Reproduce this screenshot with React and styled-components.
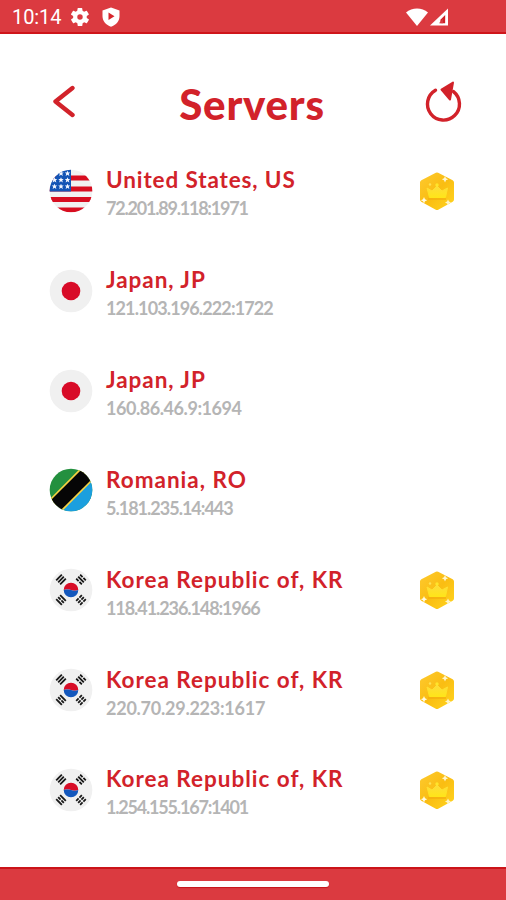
import React from 'react';
import styled, { createGlobalStyle, css } from 'styled-components';

const RED = '#d2222a';

const GlobalStyle = createGlobalStyle`
  * {
    box-sizing: border-box;
  }
  body {
    margin: 0;
    background: #fff;
    font-family: Lato, sans-serif;
  }
`;

const Screen = styled.div`
  width: 506px;
  height: 900px;
  display: flex;
  flex-direction: column;
  overflow: hidden;
  background: #fff;
`;

const bar = css`
  flex: none;
  display: flex;
  background: #db3a40;
`;

const StatusBar = styled.header`
  ${bar}
  height: 34px;
  align-items: center;
  padding: 2px 58px 0 12px;
  border-bottom: 2px solid #cf151b;
  color: #fff;
`;

const Clock = styled.span`
  width: 58px;
  font-family: Roboto, sans-serif;
  font-size: 20px;
  line-height: 32px;
  letter-spacing: -0.1px;
  white-space: nowrap;
`;

const StatusIcons = styled.div`
  display: flex;
  align-items: center;
  gap: ${({ gap }) => gap}px;
  margin-left: ${({ end }) => (end ? 'auto' : 0)};
`;

const NavBar = styled.footer`
  ${bar}
  height: 33px;
  justify-content: center;
  padding-top: 12px;
  border-top: 2px solid #cb1419;
`;

const Handle = styled.div`
  width: 152px;
  height: 6px;
  border-radius: 3px;
  background: #fff;
  box-shadow: 0 1px 1px #c6151b;
`;

const TitleBar = styled.div`
  flex: none;
  height: 107px;
  display: flex;
  align-items: flex-start;
  justify-content: space-between;
  padding: 46px 44px 0 52px;
`;

const IconButton = styled.button`
  display: block;
  padding: 0;
  border: 0;
  background: none;
  margin-top: ${({ top }) => top}px;

  svg {
    display: block;
  }
`;

const Title = styled.h1`
  margin: -2px 0 0 4px;
  color: ${RED};
  font-size: 42px;
  font-weight: 900;
  line-height: 52px;
  letter-spacing: 0.8px;
`;

const List = styled.ul`
  flex: 1;
  margin: 0;
  padding: 0 51px 0 49px;
  list-style: none;
`;

const Row = styled.li`
  height: 99.85px;
  display: flex;
  align-items: center;
`;

const Flag = styled.svg`
  flex: none;
  width: 44px;
  height: 44px;
`;

const Details = styled.div`
  flex: 1;
  margin-left: 13px;
  padding-top: 6px;
  white-space: nowrap;
`;

const Country = styled.div`
  color: ${RED};
  font-size: 22.5px;
  font-weight: 700;
  line-height: 29px;
  letter-spacing: ${({ spacing }) => spacing}px;
`;

const Address = styled.div`
  color: #b5b5b5;
  font-size: 18px;
  font-weight: 700;
  line-height: 28px;
  letter-spacing: ${({ spacing }) => spacing}px;
`;

const GearIcon = () => (
  <svg width="20" height="20" viewBox="1 1 22 22" fill="#fff">
    <path
      fillRule="evenodd"
      d="M19.4 13a7.5 7.5 0 0 0 0-2l2.1-1.6a.5.5 0 0 0 .1-.7l-2-3.4a.5.5 0 0 0-.6-.2l-2.5 1a7.4 7.4 0 0 0-1.7-1l-.4-2.6a.5.5 0 0 0-.5-.5h-4a.5.5 0 0 0-.5.4L9 5.1a7.7 7.7 0 0 0-1.7 1l-2.5-1a.5.5 0 0 0-.6.2l-2 3.4a.5.5 0 0 0 .1.7L4.500 11a7.5 7.5 0 0 0 0 2l-2.1 1.6a.5.5 0 0 0-.1.7l2 3.4c.1.2.4.3.6.2l2.5-1c.5.4 1.1.8 1.7 1l.4 2.6c0 .3.2.5.5.5h4c.2 0 .5-.2.5-.4l.4-2.7a7.7 7.7 0 0 0 1.7-1l2.5 1c.2.1.5 0 .6-.2l2-3.4a.5.5 0 0 0-.1-.7zM12 15a3 3 0 1 1 0-6 3 3 0 0 1 0 6z"
    />
  </svg>
);

const ShieldIcon = () => (
  <svg width="18" height="20" viewBox="0 0 18 20">
    <path d="M9 .5 17.5 3.500V9c0 5.200-3.500 9-8.500 10.700C4 18 .5 14.200.5 9V3.500z" fill="#fff" />
    <path d="M6.5 5.500v7.600l6-3.800z" fill="#d8262d" />
  </svg>
);

const WifiIcon = () => (
  <svg width="22" height="18" viewBox="0 0 22 18">
    <path d="M0 4.500C6-.9 16-.9 22 4.500L11 18z" fill="#fff" />
  </svg>
);

const SignalIcon = () => (
  <svg width="18" height="18" viewBox="0 0 19 18">
    <path d="M19 0v18H0z" fill="#fff" />
    <path d="M16 7v8.500h-5V12z" fill="#cf2027" />
    <path d="M13.800 10.500v5H9.500z" fill="#d93a40" />
  </svg>
);

const BackIcon = () => (
  <svg width="24" height="34" viewBox="0 0 24 34">
    <path
      d="M20.5 3 3.500 16.500l17 13.500"
      fill="none"
      stroke={RED}
      strokeWidth="4.4"
      strokeLinecap="round"
      strokeLinejoin="round"
    />
  </svg>
);

const RefreshIcon = () => (
  <svg width="38" height="44" viewBox="0 0 38 44">
    <path
      d="M11.500 10.200A16 16 0 1 0 29.500 11.600"
      fill="none"
      stroke={RED}
      strokeWidth="3.4"
      strokeLinecap="round"
    />
    <path d="M29 2.500 17.500 9.500 26 19.500z" fill={RED} stroke={RED} strokeWidth="2" strokeLinejoin="round" />
  </svg>
);

const PremiumBadge = () => (
  <svg width="36" height="40" viewBox="0 0 36 40">
    <defs>
      <linearGradient id="gold" x1="0" y1="0" x2="1" y2="1">
        <stop offset="0" stopColor="#fdc82c" />
        <stop offset="0.5" stopColor="#fabd12" />
        <stop offset="1" stopColor="#ffd21e" />
      </linearGradient>
      <linearGradient id="crown" x1="0" y1="0" x2="0" y2="1">
        <stop offset="0" stopColor="#fddc3c" />
        <stop offset="1" stopColor="#ffe519" />
      </linearGradient>
    </defs>
    <path
      d="M18 4 32.500 11.500v17L18 36.500 3.500 28.500v-17z"
      fill="url(#gold)"
      stroke="url(#gold)"
      strokeWidth="5"
      strokeLinejoin="round"
    />
    <path d="M9 27h18v2H9z" fill="#f4aa0b" opacity=".6" />
    <path
      d="m8 17 5 3 5-5 5 5 5.500-3-2 9.500h-16z"
      fill="url(#crown)"
      stroke="url(#crown)"
      strokeLinejoin="round"
    />
    <circle cx="18" cy="14" r="1.7" fill="#ffe52b" />
    <circle cx="11" cy="13.500" r="1.2" fill="#ffe052" />
    <path d="m26 5 1 2.200 2.200 1-2.200 1-1 2.200-1-2.200-2.200-1 2.200-1z" fill="#fff6d0" />
    <path d="m5 26 1 2.200 2.200 1-2.200 1-1 2.200-1-2.200-2.200-1 2.200-1z" fill="#fffbe5" />
    <path d="m29 28.500 1 2 2 1-2 1-1 2-1-2-2-1 2-1z" fill="#fff6c8" />
  </svg>
);

const FlagFrame = ({ id, children }) => (
  <Flag viewBox="0 0 44 44">
    <defs>
      <clipPath id={id}>
        <circle cx="22" cy="22" r="21.3" />
      </clipPath>
    </defs>
    <g clipPath={`url(#${id})`}>{children}</g>
  </Flag>
);

const UsFlag = ({ id }) => (
  <FlagFrame id={id}>
    <rect width="44" height="44" fill="#f1f1f1" />
    {[6.5, 17.5, 28, 38.5].map((y) => (
      <rect key={y} y={y} width="44" height="5" fill="#d80d20" />
    ))}
    <rect width="22" height="22.500" fill="#1354b5" />
    {[4.5, 11, 17.5].map((y) =>
      [5.5, 12, 18.5].map((x) => (
        <path
          key={`${x}-${y}`}
          transform={`translate(${x} ${y}) scale(1.15)`}
          d="m0-2.300.7 1.500h1.700L1.100.3l.5 1.800L0 1.100l-1.600 1 .5-1.800-1.300-1.100h1.700z"
          fill="#f4f7ff"
        />
      ))
    )}
  </FlagFrame>
);

const JpFlag = ({ id }) => (
  <FlagFrame id={id}>
    <rect width="44" height="44" fill="#f0f0f0" />
    <circle cx="22" cy="22" r="9.3" fill="#d80a27" />
  </FlagFrame>
);

const TzFlag = ({ id }) => (
  <FlagFrame id={id}>
    <rect width="44" height="44" fill="#24903f" />
    <path d="M44 0v44H0z" fill="#1b9fde" />
    <path d="M-4 48 48-4" stroke="#f6d243" strokeWidth="17.5" />
    <path d="M-4 48 48-4" stroke="#060606" strokeWidth="14" />
  </FlagFrame>
);

// bars of each trigram, from the inside out; a broken bar is a dash pattern
const SOLID = '8';
const BROKEN = '3.4 1.2';

const trigrams = [
  { x: 12, y: 11.5, angle: -45, bars: [SOLID, SOLID, SOLID] },
  { x: 32, y: 11.5, angle: 45, bars: [BROKEN, SOLID, BROKEN] },
  { x: 12, y: 32, angle: 45, bars: [SOLID, BROKEN, SOLID] },
  { x: 32, y: 32, angle: -45, bars: [BROKEN, BROKEN, BROKEN] },
];

const KrFlag = ({ id }) => (
  <FlagFrame id={id}>
    <rect width="44" height="44" fill="#f0f0f0" />
    <path d="M14.700 22a7.300 7.300 0 0 1 14.600 0c-2.300 1-5 1-7.300 0-2.300-.6-5-.6-7.300 0z" fill="#d80d27" />
    <path d="M29.300 22a7.300 7.300 0 0 1-14.600 0c2.300-.6 5-.6 7.300 0 2.300 1 5 1 7.300 0z" fill="#1458bd" />
    {trigrams.map(({ x, y, angle, bars }) => (
      <g key={`${x}-${y}`} transform={`translate(${x} ${y}) rotate(${angle})`}>
        {bars.map((dash, i) => (
          <path key={i} d={`M-4 ${(i - 1) * 2.8}h8`} stroke="#171717" strokeWidth="1.8" strokeDasharray={dash} />
        ))}
      </g>
    ))}
  </FlagFrame>
);

const servers = [
  { flag: UsFlag, country: 'United States, US', spacing: 0.88, address: '72.201.89.118:1971', addressSpacing: -1.22, premium: true },
  { flag: JpFlag, country: 'Japan, JP', spacing: 0.95, address: '121.103.196.222:1722', addressSpacing: -0.88 },
  { flag: JpFlag, country: 'Japan, JP', spacing: 0.95, address: '160.86.46.9:1694', addressSpacing: -0.45 },
  { flag: TzFlag, country: 'Romania, RO', spacing: 1, address: '5.181.235.14:443', addressSpacing: -1 },
  { flag: KrFlag, country: 'Korea Republic of, KR', spacing: 0.98, address: '118.41.236.148:1966', addressSpacing: -1.08, premium: true },
  { flag: KrFlag, country: 'Korea Republic of, KR', spacing: 0.98, address: '220.70.29.223:1617', addressSpacing: -0.25, premium: true },
  { flag: KrFlag, country: 'Korea Republic of, KR', spacing: 0.98, address: '1.254.155.167:1401', addressSpacing: -1.2, premium: true },
];

export default function App() {
  return (
    <>
      <GlobalStyle />
      <Screen>
        <StatusBar>
          <Clock>10:14</Clock>
          <StatusIcons gap={12}>
            <GearIcon />
            <ShieldIcon />
          </StatusIcons>
          <StatusIcons gap={2} end>
            <WifiIcon />
            <SignalIcon />
          </StatusIcons>
        </StatusBar>
        <TitleBar>
          <IconButton top={5} aria-label="Back">
            <BackIcon />
          </IconButton>
          <Title>Servers</Title>
          <IconButton top={0} aria-label="Refresh">
            <RefreshIcon />
          </IconButton>
        </TitleBar>
        <List>
          {servers.map(({ flag: FlagIcon, country, spacing, address, addressSpacing, premium }) => (
            <Row key={address}>
              <FlagIcon id={`flag-${address.replace(/\W/g, '')}`} />
              <Details>
                <Country spacing={spacing}>{country}</Country>
                <Address spacing={addressSpacing}>{address}</Address>
              </Details>
              {premium && <PremiumBadge />}
            </Row>
          ))}
        </List>
        <NavBar>
          <Handle />
        </NavBar>
      </Screen>
    </>
  );
}
